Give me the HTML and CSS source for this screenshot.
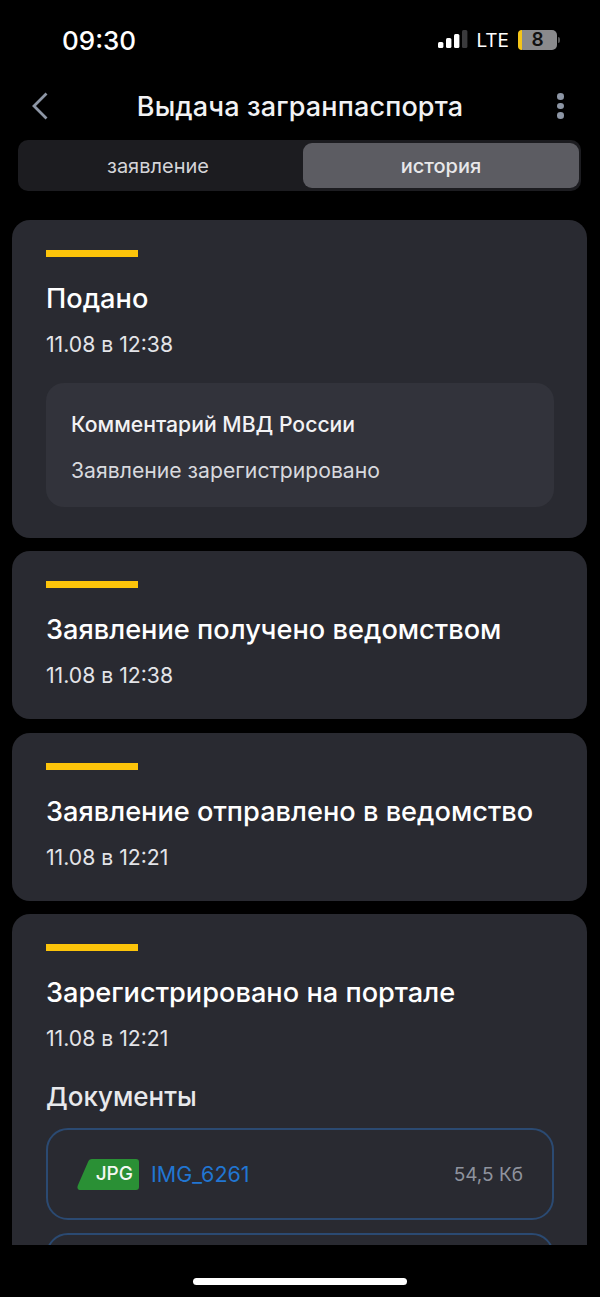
FILE: index.html
```html
<!DOCTYPE html>
<html lang="ru">
<head>
<meta charset="utf-8">
<title>Выдача загранпаспорта</title>
<link rel="stylesheet" href="styles.css">
</head>
<body>
<div class="screen">
  <div class="status">
    <span class="time">09:30</span>
    <div class="status-right">
      <svg class="signal" width="30" height="20" viewBox="0 0 30 20"><rect x="0" y="12" width="5.4" height="6" rx="1.5" fill="#fff"/><rect x="8" y="8" width="5.4" height="10" rx="1.5" fill="#fff"/><rect x="16" y="4" width="5.4" height="14" rx="1.5" fill="#fff"/><rect x="24" y="0" width="5.4" height="18" rx="1.5" fill="#3a3a3c"/></svg>
      <span class="lte">LTE</span>
      <div class="battery"><span class="battery-fill"></span><span class="battery-num">8</span></div>
      <span class="battery-cap"></span>
    </div>
  </div>
  <header class="nav">
    <svg class="back" width="20" height="28" viewBox="0 0 20 28"><path d="M16.5 1.5 L4 14 L16.5 26.5" fill="none" stroke="#8d96a5" stroke-width="2.8"/></svg>
    <h1 class="nav-title">Выдача загранпаспорта</h1>
    <div class="dots"><i></i><i></i><i></i></div>
  </header>
  <div class="tabs">
    <div class="tab">заявление</div>
    <div class="tab tab-active">история</div>
  </div>
  <main class="list">
    <section class="card">
      <div class="bar"></div>
      <h2 class="title">Подано</h2>
      <p class="date">11.08 в 12:38</p>
      <div class="comment">
        <div class="comment-title">Комментарий МВД России</div>
        <div class="comment-text">Заявление зарегистрировано</div>
      </div>
    </section>
    <section class="card">
      <div class="bar"></div>
      <h2 class="title">Заявление получено ведомством</h2>
      <p class="date">11.08 в 12:38</p>
    </section>
    <section class="card">
      <div class="bar"></div>
      <h2 class="title">Заявление отправлено в ведомство</h2>
      <p class="date">11.08 в 12:21</p>
    </section>
    <section class="card">
      <div class="bar"></div>
      <h2 class="title">Зарегистрировано на портале</h2>
      <p class="date">11.08 в 12:21</p>
      <h3 class="docs">Документы</h3>
      <div class="file">
        <div class="badge">
          <svg class="badge-shape" width="62" height="31" viewBox="0 0 62 31"><path d="M15 0 H59 Q62 0 62 3 V28 Q62 31 59 31 H4 Q-1 31 1 26 L11 3 Q12 0 15 0 Z" fill="#2a9035"/></svg>
          <span class="badge-text">JPG</span>
        </div>
        <span class="file-name">IMG_6261</span>
        <span class="file-size">54,5 Кб</span>
      </div>
      <div class="file"></div>
    </section>
  </main>
  <div class="home"><span class="home-bar"></span></div>
</div>
</body>
</html>
```
FILE: styles.css
```css
* { box-sizing: border-box; }
html, body { margin: 0; padding: 0; background: #000; }
body { font-family: Inter, "Liberation Sans", sans-serif; color: #fff; }
.screen { width: 600px; height: 1297px; display: flex; flex-direction: column; overflow: hidden; background: #000; }

.status { height: 80px; flex: none; display: flex; justify-content: space-between; align-items: center; padding: 0 40px 0 62px; }
.time { font-size: 26px; font-weight: 500; }
.status-right { display: flex; align-items: center; }
.signal { margin-right: 8px; }
.lte { font-size: 19px; font-weight: 400; margin-right: 9px; }
.battery { width: 39px; height: 20px; border-radius: 5px; background: #8a8a8c; position: relative; display: flex; align-items: center; justify-content: center; }
.battery-fill { position: absolute; left: 0; top: 0; bottom: 0; width: 4px; background: #f5c518; border-radius: 5px 0 0 5px; }
.battery-num { color: #111; font-size: 19px; line-height: 20px; font-weight: 600; }
.battery-cap { width: 2px; height: 6px; margin-left: 1px; background: #555; border-radius: 0 2px 2px 0; }

.nav { height: 52px; flex: none; display: grid; grid-template-columns: 1fr auto 1fr; align-items: center; padding: 0 30px; }
.nav-title { margin: 0; font-size: 27px; font-weight: 500; letter-spacing: 0.15px; color: #f2f2f4; }
.back { display: block; }
.dots { justify-self: end; margin-right: 6px; display: flex; flex-direction: column; gap: 3px; }
.dots i { width: 7px; height: 6.5px; border-radius: 50%; background: #8d96a5; display: block; }

.tabs { height: 51px; flex: none; margin: 8px 19px 0 18px; padding: 3px 2px 3px 3px; background: #1c1c20; border-radius: 10px; display: grid; grid-template-columns: 282px 1fr; }
.tab { display: flex; align-items: center; justify-content: center; font-size: 20px; color: #d4d4d8; border-radius: 9px; padding-right: 8px; }
.tab-active { background: #5c5c62; color: #e8e8ea; font-weight: 500; padding-right: 0; }

.list { flex: 1; min-height: 0; overflow: hidden; padding: 29px 13px 0 12px; display: flex; flex-direction: column; gap: 13.4px; }
.card { flex: none; background: #292a31; border-radius: 18px; padding: 30px 33px 30px 34px; }
.bar { width: 92px; height: 7px; background: #fcc40a; }
.title { margin: 26px 0 0; font-size: 27.2px; line-height: 32px; font-weight: 500; color: #fff; }
.date { margin: 16px 0 1px; font-size: 21.2px; line-height: 26px; color: #e3e4e8; }
.comment { margin: 26px 0 1px; background: #32333b; border-radius: 18px; padding: 27px 25px 24px; height: 124px; }
.comment-title { font-size: 21.2px; line-height: 28px; font-weight: 500; color: #f2f2f4; }
.comment-text { margin-top: 18px; font-size: 21.2px; line-height: 28px; color: #d8d9de; }
.docs { margin: 30px 0 0; font-size: 26px; line-height: 32px; font-weight: 500; color: #e8e9ec; }
.file { margin-top: 15px; height: 92px; border: 2px solid #2b4a72; border-radius: 22px; display: flex; align-items: center; padding: 0 29px; }
.file + .file { margin-top: 13px; }
.badge { position: relative; width: 62px; height: 31px; flex: none; display: flex; align-items: center; justify-content: flex-end; padding-right: 6px; }
.badge-shape { position: absolute; left: 0; top: 0; }
.badge-text { position: relative; font-size: 19px; font-weight: 500; color: #f4f8f4; top: -1px; }
.file-name { margin-left: 12px; font-size: 21.5px; color: #2176d2; }
.file-size { margin-left: auto; font-size: 19px; color: #8f939e; }

.home { height: 52px; flex: none; background: #000; display: flex; justify-content: center; padding-top: 33px; }
.home-bar { width: 214px; height: 7px; border-radius: 4px; background: #fff; }
```
